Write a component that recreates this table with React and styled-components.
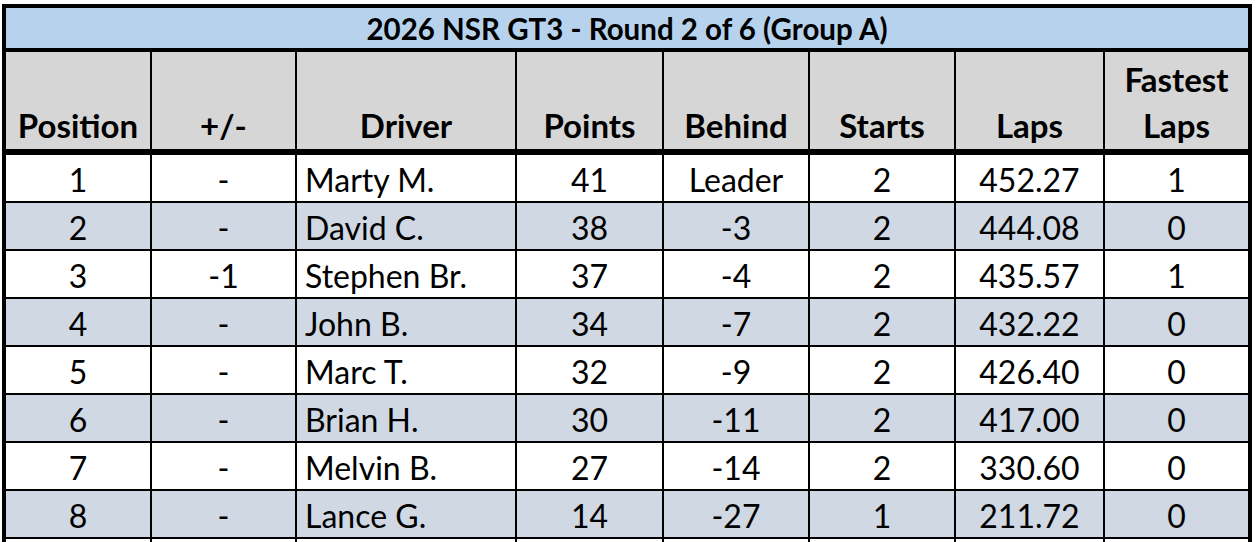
import React from 'react';
import styled, { createGlobalStyle } from 'styled-components';

const GlobalStyle = createGlobalStyle`
  html, body {
    margin: 0;
    padding: 0;
    background: #fff;
    overflow: hidden;
  }

  body {
    font-family: Lato, "Open Sans", sans-serif;
    color: #000;
  }
`;

const COLUMNS = '144px 143px 218px 145px 144px 144px 147px 143px';

const StyledSheet = styled.div`
  box-sizing: border-box;
  width: 1250px;
  margin: 4px 0 0 2px;
  border: 4px solid #000;
  border-bottom: none;
`;

const StyledTitle = styled.div`
  height: 40px;
  display: flex;
  align-items: center;
  justify-content: center;
  background: #b6d2ec;
  border-bottom: 4px solid #000;
  font-size: 29.5px;
  font-weight: 700;
`;

const StyledGrid = styled.div`
  display: grid;
  grid-template-columns: ${COLUMNS};
  column-gap: 2px;
  background: #000;
`;

const StyledHeaderRow = styled(StyledGrid)`
  border-bottom: 6px double #000;
`;

const StyledHeaderCell = styled.div`
  height: 97px;
  display: flex;
  flex-direction: column;
  justify-content: flex-end;
  align-items: center;
  background: #d6d6d6;
  font-size: 33px;
  font-weight: 700;
  line-height: 46px;
  padding-bottom: 1px;
  box-sizing: border-box;
`;

const StyledRow = styled(StyledGrid)`
  border-bottom: 2px solid #000;
`;

const StyledCell = styled.div`
  height: 46px;
  display: flex;
  align-items: center;
  justify-content: ${({ $left }) => ($left ? 'flex-start' : 'center')};
  padding: 3px ${({ $left }) => ($left ? '8px' : '0')} 0;
  box-sizing: border-box;
  background: ${({ $shaded }) => ($shaded ? '#d0d8e3' : '#fff')};
  font-size: 32px;
  white-space: nowrap;
`;

const headers = [['Position'], ['+/-'], ['Driver'], ['Points'], ['Behind'], ['Starts'], ['Laps'], ['Fastest', 'Laps']];

const standings = [
  ['1', '-', 'Marty M.', '41', 'Leader', '2', '452.27', '1'],
  ['2', '-', 'David C.', '38', '-3', '2', '444.08', '0'],
  ['3', '-1', 'Stephen Br.', '37', '-4', '2', '435.57', '1'],
  ['4', '-', 'John B.', '34', '-7', '2', '432.22', '0'],
  ['5', '-', 'Marc T.', '32', '-9', '2', '426.40', '0'],
  ['6', '-', 'Brian H.', '30', '-11', '2', '417.00', '0'],
  ['7', '-', 'Melvin B.', '27', '-14', '2', '330.60', '0'],
  ['8', '-', 'Lance G.', '14', '-27', '1', '211.72', '0'],
  ['', '', '', '', '', '', '', ''],
];

const App = () => (
  <>
    <GlobalStyle />
    <StyledSheet>
      <StyledTitle>2026 NSR GT3 - Round 2 of 6 (Group A)</StyledTitle>

      <StyledHeaderRow>
        {headers.map((lines, i) => (
          <StyledHeaderCell key={i}>
            {lines.map(line => (
              <span key={line}>{line}</span>
            ))}
          </StyledHeaderCell>
        ))}
      </StyledHeaderRow>

      {standings.map((row, r) => (
        <StyledRow key={r}>
          {row.map((value, c) => (
            <StyledCell key={c} $left={c === 2} $shaded={r % 2 === 1 && r < 8}>
              {value}
            </StyledCell>
          ))}
        </StyledRow>
      ))}
    </StyledSheet>
  </>
);

export default App;
